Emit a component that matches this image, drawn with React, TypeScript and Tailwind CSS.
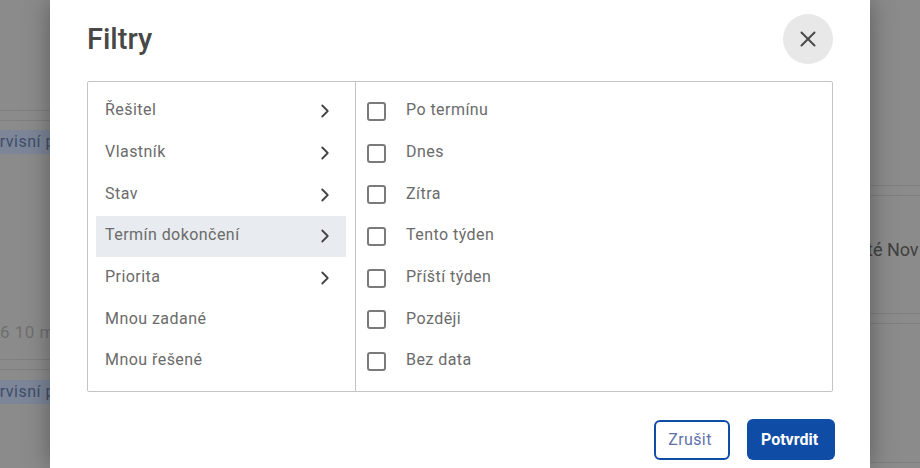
import { ChevronRight, X } from "lucide-react";

const CATEGORIES = [
  { label: "Řešitel", more: true },
  { label: "Vlastník", more: true },
  { label: "Stav", more: true },
  { label: "Termín dokončení", more: true, active: true },
  { label: "Priorita", more: true },
  { label: "Mnou zadané" },
  { label: "Mnou řešené" },
];

const OPTIONS = ["Po termínu", "Dnes", "Zítra", "Tento týden", "Příští týden", "Později", "Bez data"];

function Divider() {
  return <div className="h-[11px] border-y border-[#7f7f7f] bg-[#8b8b8b]" />;
}

function LeftStrip() {
  return (
    <div className="overflow-hidden whitespace-nowrap pt-[110px] text-[16px] text-[#5f5f5f]">
      <Divider />
      <div className="mt-[9px] flex h-[24px] items-center justify-end bg-[#7c8698] text-[#3f4d6c]">
        <span className="-mr-[5px] tracking-[0.5px]">rvisní p</span>
      </div>
      <div className="mt-[167px] flex h-[24px] items-center justify-end text-[#6f6f6f]">
        <span className="-mr-[5px] text-[17px] tracking-[0.5px]">6 10 m</span>
      </div>
      <div className="mt-[14px]">
        <Divider />
      </div>
      <div className="mt-[10px] flex h-[24px] items-center justify-end bg-[#7c8698] text-[#3f4d6c]">
        <span className="-mr-[5px] tracking-[0.5px]">rvisní p</span>
      </div>
    </div>
  );
}

function RightStrip() {
  return (
    <div className="overflow-hidden whitespace-nowrap pt-[185px] text-[18px] text-[#404040]">
      <Divider />
      <div className="mt-[41px] flex h-[24px] items-center">
        <span className="-ml-[3px]">té Nov</span>
      </div>
      <div className="mt-[52px]">
        <Divider />
      </div>
      <div className="mt-[138px] border-t border-[#7f7f7f]" />
    </div>
  );
}

export default function App() {
  return (
    <div className="grid h-[468px] w-[920px] grid-cols-[50px_820px_50px] overflow-hidden bg-[#8b8b8b] font-['Roboto',sans-serif]">
      <LeftStrip />

      <div className="relative bg-white px-[37px] shadow-[0_0_24px_rgba(0,0,0,0.35)]">
        <div className="flex h-[81px] items-start justify-between pt-[14px]">
          <h2 className="mt-[1px] text-[29px] leading-[48px] font-medium text-[#484848]">Filtry</h2>
          <button className="flex h-[50px] w-[50px] items-center justify-center rounded-full bg-[#e8e8e8] text-[#4a4a4a]">
            <X className="h-[26px] w-[26px]" strokeWidth={1.8} />
          </button>
        </div>

        <div className="grid h-[311px] grid-cols-[268px_1fr] rounded-[2px] border border-[#c4c4c4]">
          <ul className="border-r border-[#c4c4c4] pt-[8.5px] pr-[9px] pl-2">
            {CATEGORIES.map((c) => (
              <li
                key={c.label}
                className={`flex h-[41.7px] items-center justify-between pr-[10px] pl-[9px] text-[16px] tracking-[0.45px] text-[#6b6b6b] ${c.active ? "bg-[#e8ebef]" : ""}`}
              >
                <span className="-mt-[2px]">{c.label}</span>
                {c.more && <ChevronRight className="h-[22px] w-[22px] text-[#444444]" strokeWidth={2} />}
              </li>
            ))}
          </ul>
          <ul className="pt-[8.5px] pl-[11px]">
            {OPTIONS.map((o) => (
              <li key={o} className="flex h-[41.7px] items-center gap-[20px] text-[16px] tracking-[0.45px] text-[#6b6b6b]">
                <span className="h-[19px] w-[19px] rounded-[3px] border-2 border-[#7a7a7a]" />
                <span className="-mt-[2px]">{o}</span>
              </li>
            ))}
          </ul>
        </div>

        <div className="-mr-[2px] mt-[27px] flex items-center justify-end gap-[17px]">
          <button className="h-[40px] w-[76px] rounded-[6px] border-2 border-[#0f4ca5] pr-[4px] text-[16px] tracking-[0.4px] text-[#6272a8]">
            Zrušit
          </button>
          <button className="h-[41px] w-[88px] rounded-[6px] bg-[#0f4ca5] pr-[3px] text-[16px] font-bold text-white">
            Potvrdit
          </button>
        </div>
      </div>

      <RightStrip />
    </div>
  );
}
